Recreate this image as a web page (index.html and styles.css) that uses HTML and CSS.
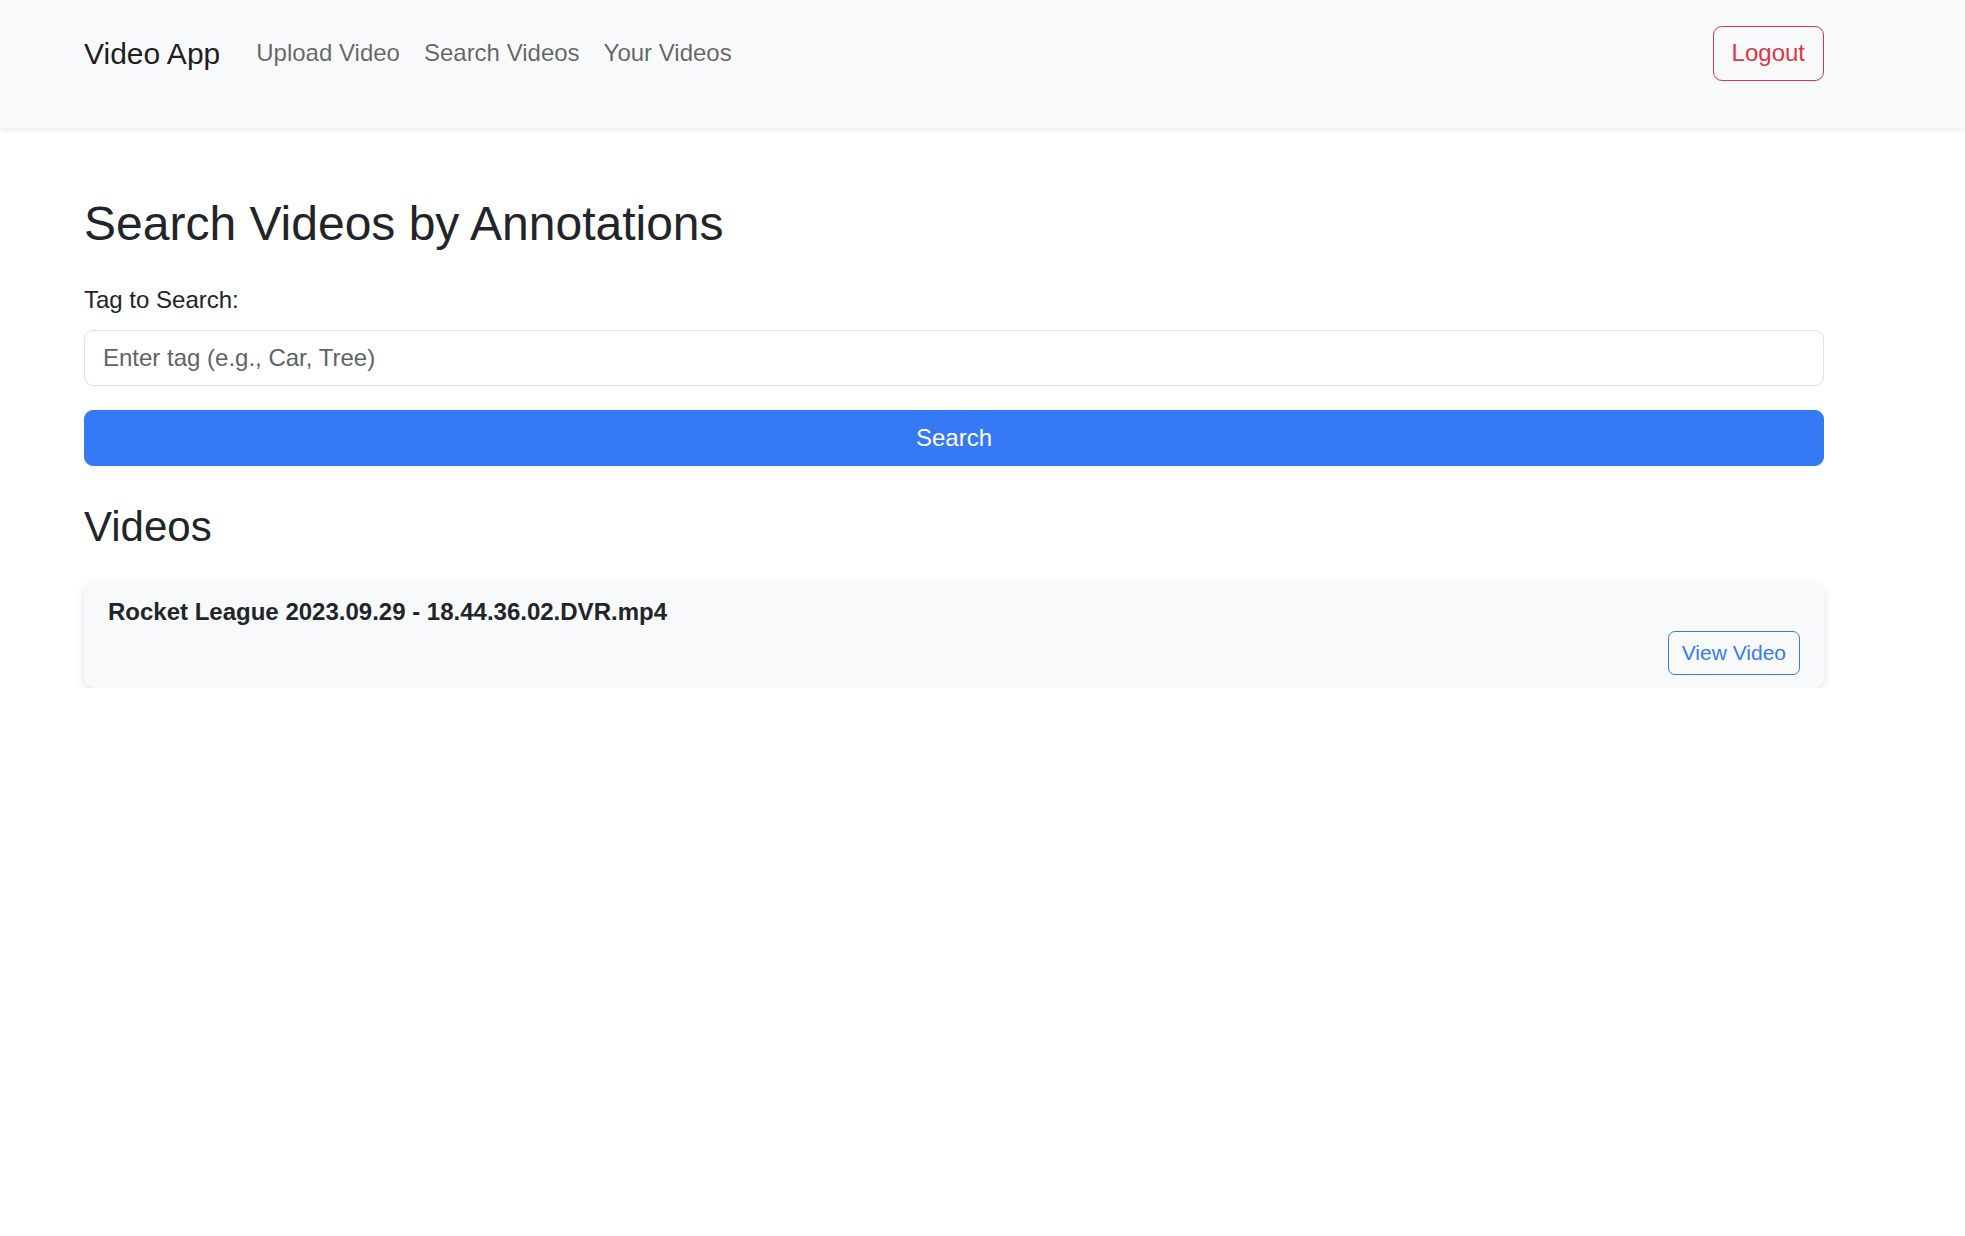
FILE: index.html
```html
<!DOCTYPE html>
<html lang="en">
<head>
<meta charset="utf-8">
<title>Video App - Search Videos</title>
<link rel="stylesheet" href="styles.css">
</head>
<body>
<nav class="navbar">
  <a class="brand" href="#">Video App</a>
  <ul class="nav-links">
    <li><a href="#">Upload Video</a></li>
    <li><a href="#">Search Videos</a></li>
    <li><a href="#">Your Videos</a></li>
  </ul>
  <button class="btn-logout" type="button">Logout</button>
</nav>
<main class="content">
  <h2 class="page-title">Search Videos by Annotations</h2>
  <form class="search-form">
    <label class="form-label" for="tag">Tag to Search:</label>
    <input class="form-control" id="tag" type="text" placeholder="Enter tag (e.g., Car, Tree)">
    <button class="btn-search" type="button">Search</button>
  </form>
  <h3 class="section-title">Videos</h3>
  <div class="video-card">
    <div class="video-title">Rocket League 2023.09.29 - 18.44.36.02.DVR.mp4</div>
    <div class="video-actions">
      <a class="btn-view" href="#">View Video</a>
    </div>
  </div>
</main>
</body>
</html>
```

FILE: styles.css
```css
* {
  box-sizing: border-box;
}

html, body {
  margin: 0;
  padding: 0;
  background: #ffffff;
}

body {
  font-family: "Liberation Sans", Arial, sans-serif;
  font-size: 24px;
  line-height: 1.5;
  color: #212529;
}

.navbar {
  display: flex;
  align-items: center;
  height: 128px;
  padding: 0 141px 22px 84px;
  background: #f8f9fa;
  box-shadow: 0 2px 6px rgba(0, 0, 0, 0.09);
}

.brand {
  font-size: 30px;
  line-height: 45px;
  color: rgba(0, 0, 0, 0.9);
  text-decoration: none;
  margin-right: 24px;
}

.nav-links {
  display: flex;
  list-style: none;
  margin: 0;
  padding: 0;
  flex: 1;
}

.nav-links a {
  display: block;
  padding: 0 12px;
  line-height: 36px;
  font-size: 24px;
  color: rgba(0, 0, 0, 0.6);
  text-decoration: none;
}

.btn-logout {
  font-family: inherit;
  font-size: 24px;
  line-height: 36px;
  padding: 8.5px 18px;
  color: #dc3545;
  background: transparent;
  border: 1px solid #dc3545;
  border-radius: 9px;
  cursor: pointer;
}

.content {
  padding: 0 141px 0 84px;
}

.page-title {
  margin: 67px 0 0;
  font-size: 48px;
  font-weight: 400;
  line-height: 1.2;
  color: #212529;
}

.search-form {
  display: flex;
  flex-direction: column;
}

.form-label {
  display: block;
  margin-top: 29px;
  margin-bottom: 12px;
  line-height: 36px;
  font-size: 24px;
}

.form-control {
  display: block;
  width: 100%;
  height: 56px;
  padding: 0 18px;
  font-family: inherit;
  font-size: 24px;
  color: #212529;
  background: #ffffff;
  border: 1px solid #dee2e6;
  border-radius: 9px;
  outline: none;
}

.form-control::placeholder {
  color: #5f6367;
}

.btn-search {
  margin-top: 24px;
  height: 56px;
  width: 100%;
  font-family: inherit;
  font-size: 24px;
  line-height: 36px;
  color: #ffffff;
  background: #3679f5;
  border: 1px solid #3679f5;
  border-radius: 9px;
  cursor: pointer;
}

.section-title {
  margin: 36px 0 0;
  font-size: 42px;
  font-weight: 400;
  line-height: 1.2;
  color: #212529;
}

.video-card {
  margin-top: 31px;
  padding: 15px 24px 13px;
  background: #f8f9fa;
  border-radius: 10px;
  box-shadow: 0 3px 10px rgba(0, 0, 0, 0.12);
}

.video-title {
  font-size: 24px;
  font-weight: 700;
  line-height: 28.8px;
  color: #212529;
}

.video-actions {
  display: flex;
  justify-content: flex-end;
  margin-top: 4px;
}

.btn-view {
  display: inline-block;
  padding: 0 13px;
  font-size: 21px;
  line-height: 42px;
  color: #3679f5;
  text-decoration: none;
  border: 1px solid #3679f5;
  border-radius: 7px;
}
```
